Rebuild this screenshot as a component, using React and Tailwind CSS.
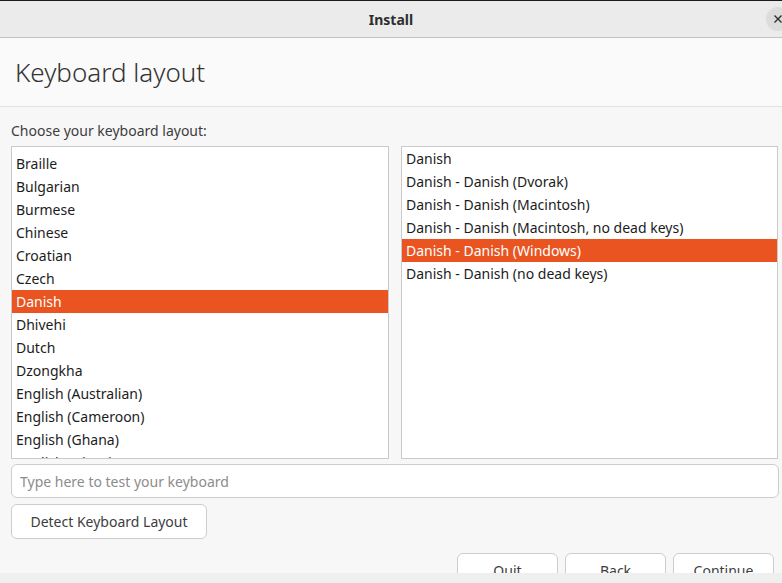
import React from 'react';

const layouts = [
  'Braille', 'Bulgarian', 'Burmese', 'Chinese', 'Croatian', 'Czech', 'Danish',
  'Dhivehi', 'Dutch', 'Dzongkha', 'English (Australian)', 'English (Cameroon)',
  'English (Ghana)', 'English (Nigeria)',
];

const variants = [
  'Danish',
  'Danish - Danish (Dvorak)',
  'Danish - Danish (Macintosh)',
  'Danish - Danish (Macintosh, no dead keys)',
  'Danish - Danish (Windows)',
  'Danish - Danish (no dead keys)',
];

const Row = ({ label, active }) => (
  <div className={`h-[23px] flex items-center px-[4px] whitespace-nowrap ${active ? 'bg-[#e95420] text-white' : 'text-[#1c1c1c]'}`}>
    {label}
  </div>
);

const App = () => {
  return (
    <div className="w-[782px] h-[583px] flex flex-col overflow-hidden bg-[#efefef] text-[14px] text-[#3d3d3d]" style={{ fontFamily: '"Noto Sans", "Open Sans", sans-serif' }}>
      <div className="h-[573px] shrink-0 flex flex-col overflow-hidden bg-[#f7f7f7]">
        {/* title bar */}
        <div className="h-[1px] shrink-0 bg-[#1d1a1c]" />
        <div className="h-[37px] shrink-0 relative flex items-center justify-center bg-[#ebebeb] border-b border-[#c2c2c2]">
          <span className="font-bold text-[14px] text-[#2e2e2e]">Install</span>
          <div className="absolute left-[766px] top-[6px] w-[24px] h-[24px] rounded-full bg-[#dcdcdc] flex items-center justify-center">
            <svg width="10" height="10" viewBox="0 0 10 10" className="-ml-[1px]">
              <path d="M1.5 1.5 L8.5 8.5 M8.5 1.5 L1.5 8.5" stroke="#2e2e2e" strokeWidth="1.4" />
            </svg>
          </div>
        </div>

        {/* header */}
        <div className="h-[69px] shrink-0 bg-[#fafafa] border-b border-[#e2e2e2] flex items-center px-[15px]">
          <h1 className="text-[26px] font-light text-[#333]">Keyboard layout</h1>
        </div>

        {/* body */}
        <div className="pl-[11px] pr-[4px] pt-[14px] flex flex-col shrink-0">
          <p className="h-[20px] leading-[20px] mb-[5px] text-[#3d3d3d]">Choose your keyboard layout:</p>
          <div className="flex gap-[12px]">
            <div className="w-[379px] h-[313px] bg-white border border-[#cacaca] overflow-hidden pt-[5px]">
              {layouts.map(l => <Row key={l} label={l} active={l === 'Danish'} />)}
            </div>
            <div className="w-[378px] h-[313px] bg-white border border-[#cacaca] overflow-hidden">
              {variants.map(v => <Row key={v} label={v} active={v === 'Danish - Danish (Windows)'} />)}
            </div>
          </div>
          <input
            readOnly
            placeholder="Type here to test your keyboard"
            className="mt-[5px] w-[768px] h-[34px] bg-white border border-[#cdcdcd] rounded-[6px] px-[8px] outline-none placeholder:text-[#8c8c8c]"
          />
          <div className="mt-[6px]">
            <button className="w-[196px] h-[35px] bg-white border border-[#cdcdcd] rounded-[6px] text-[#3d3d3d]">
              Detect Keyboard Layout
            </button>
          </div>
          <div className="mt-[14px] flex justify-end gap-[7px] pr-[4px] shrink-0">
            {['Quit', 'Back', 'Continue'].map(b => (
              <button key={b} className="w-[101px] h-[35px] bg-white border border-[#cdcdcd] rounded-[6px] text-[#3d3d3d] shrink-0">
                {b}
              </button>
            ))}
          </div>
        </div>
      </div>
      <div className="flex-1 bg-[#efefef]" />
    </div>
  );
};

export default App;
